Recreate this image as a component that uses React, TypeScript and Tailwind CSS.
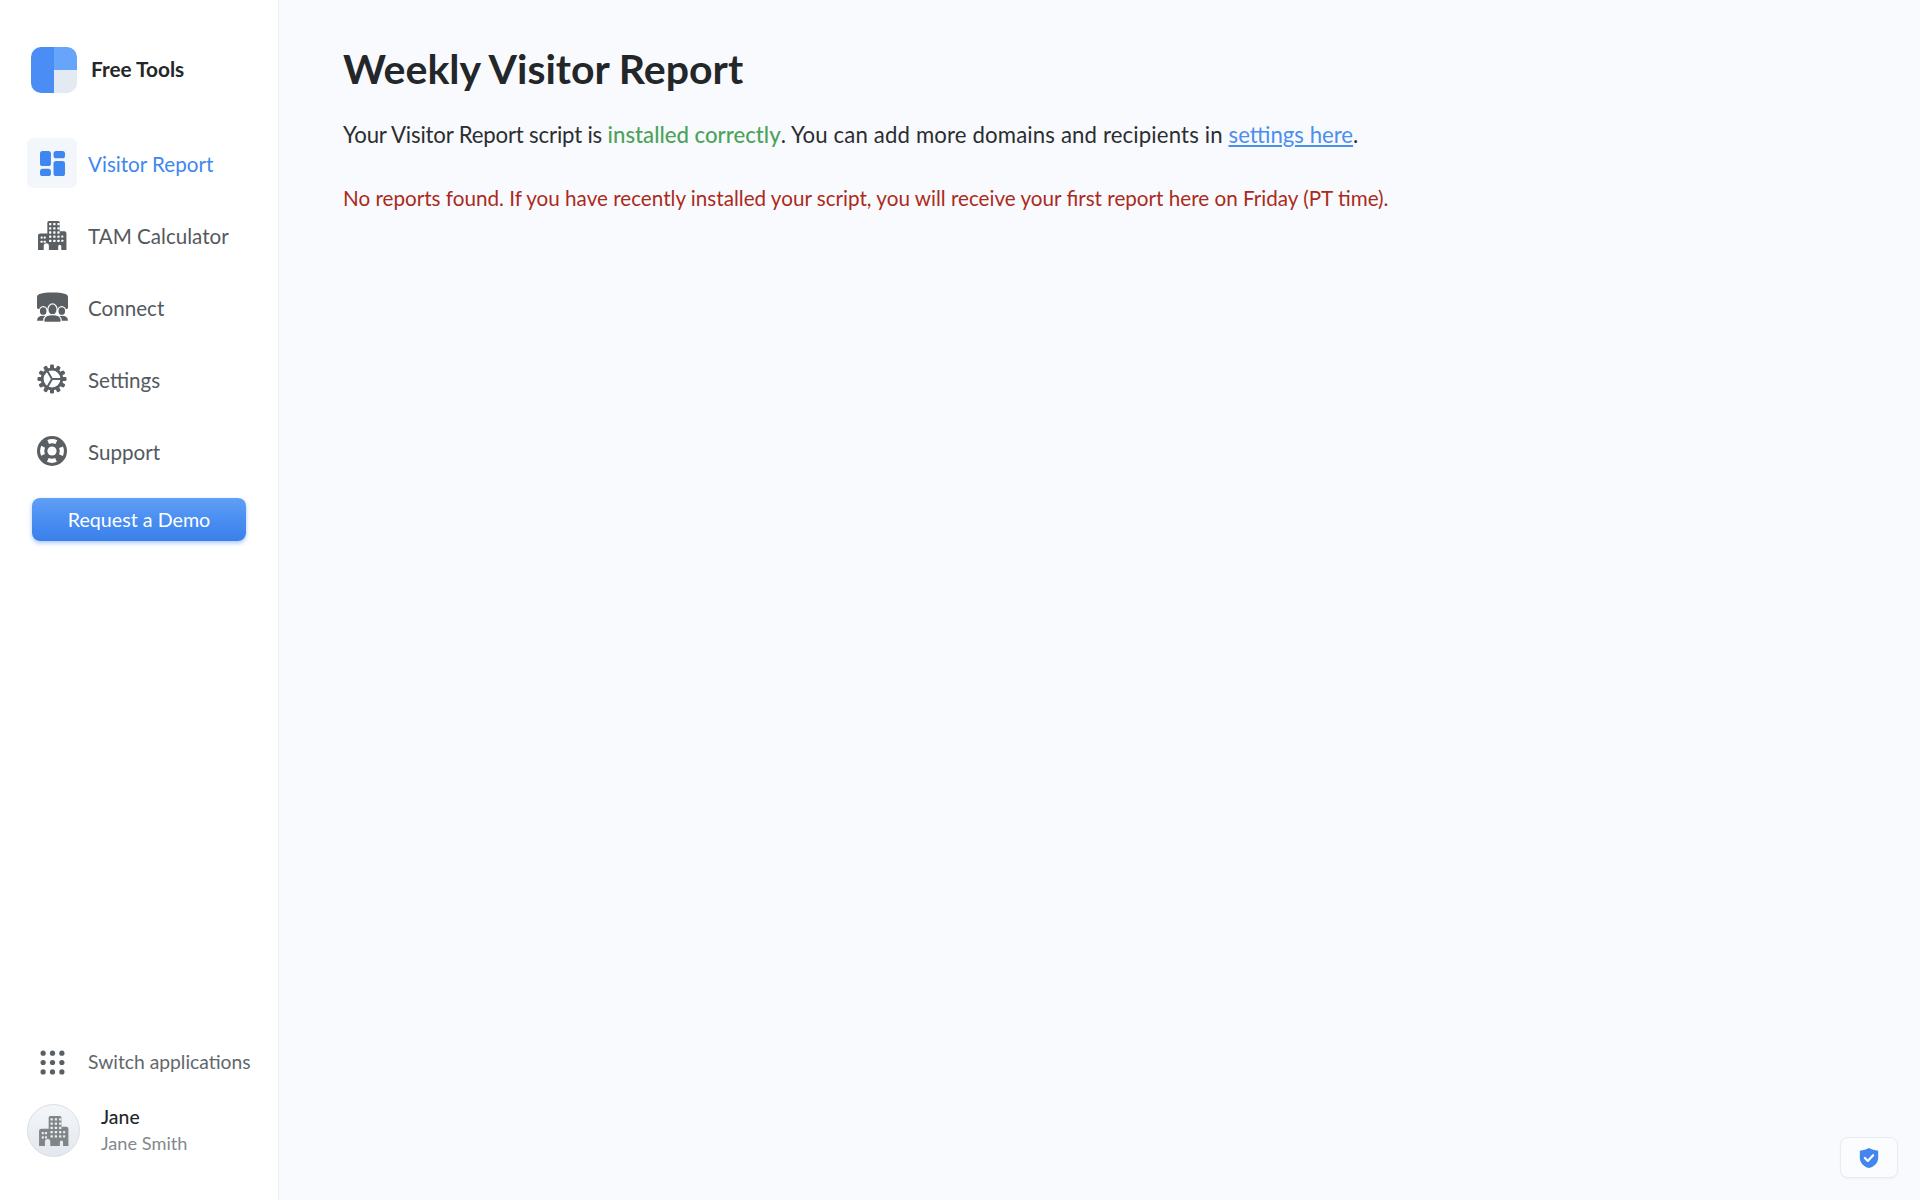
function Building({ className, hole = "#ffffff" }: { className?: string; hole?: string }) {
  const dots: [number, number][] = [];
  for (const y of [3, 7, 11, 15, 19]) for (const x of [12, 16, 20]) dots.push([x, y]);
  return (
    <svg viewBox="0 0 30 30" className={className}>
      <path fill="currentColor" fillRule="evenodd" d="M10 2.500a1.500 1.500 0 0 1 1.500-1.500h9a1.500 1.500 0 0 1 1.500 1.500V11h4.500a2 2 0 0 1 2 2v16h-5v-3.500a1.500 1.500 0 0 0-3 0V29h-9v-4a2.500 2.500 0 0 0-5 0v4H1V15a2 2 0 0 1 2-2h7z" />
      {dots.map(([x, y]) => (
        <rect key={x + "-" + y} x={x - 0.3} y={y} width="2.200" height="2.200" rx="0.500" fill={hole} />
      ))}
      {[[4, 16], [4, 20], [7, 16], [7, 20], [24, 15], [24, 19]].map(([x, y]) => (
        <rect key={"s" + x + y} x={x - 0.5} y={y} width="2" height="2" rx="0.500" fill={hole} />
      ))}
    </svg>
  );
}

function Dashboard({ className }: { className?: string }) {
  return (
    <svg viewBox="0 0 24 24" className={className}>
      <g fill="currentColor">
        <rect x="0" y="0" width="10.500" height="14.500" rx="2.500" />
        <rect x="0" y="17" width="10.500" height="7" rx="2.500" />
        <rect x="13" y="0" width="11" height="7" rx="2.500" />
        <rect x="13" y="9.500" width="11" height="14.500" rx="2.500" />
      </g>
    </svg>
  );
}

function Connect({ className }: { className?: string }) {
  return (
    <svg viewBox="0 0 30 30" className={className}>
      <path fill="currentColor" d="M0 5c0-3 4-4.500 15-4.500S30 2 30 5v10c0 1-1 1.500-2 1.500H2c-1 0-2-.5-2-1.500z" />
      <g fill="currentColor" stroke="#ffffff" strokeWidth="1.200">
        <ellipse cx="6" cy="18.500" rx="3.800" ry="4.400" />
        <ellipse cx="24" cy="18.500" rx="3.800" ry="4.400" />
        <path d="M-0.500 27.500c0-3.500 2.500-5 6.500-5s6.500 1.500 6.500 5c0 .8-.5 1-1 1H0.500c-.5 0-1-.2-1-1z" />
        <path d="M17.500 27.500c0-3.500 2.500-5 6.500-5s6.500 1.500 6.500 5c0 .8-.5 1-1 1H18.500c-.5 0-1-.2-1-1z" />
      </g>
      <g fill="currentColor" stroke="#ffffff" strokeWidth="1.200">
        <ellipse cx="15" cy="17" rx="4.500" ry="5.500" />
        <path d="M6.500 27.800c0-3.800 3.500-5.800 8.500-5.800s8.500 2 8.500 5.800c0 1-.6 1.700-1.600 1.700H8.100c-1 0-1.600-.7-1.600-1.700z" />
      </g>
    </svg>
  );
}

function Gear({ className }: { className?: string }) {
  const teeth = Array.from({ length: 12 }, (_, i) => i * 30);
  return (
    <svg viewBox="0 0 30 30" className={className}>
      <g fill="currentColor">
        {teeth.map((a) => (
          <rect key={a} x="13" y="0.500" width="4" height="6" rx="1.300" transform={`rotate(${a} 15 15)`} />
        ))}
      </g>
      <circle cx="15" cy="15" r="9.800" fill="#ffffff" stroke="currentColor" strokeWidth="2.800" />
      <path d="M15 15 L24 15 M15 15 L10.500 7.200 M15 15 L10.500 22.800" stroke="currentColor" strokeWidth="2" fill="none" />
    </svg>
  );
}

function Lifebuoy({ className }: { className?: string }) {
  return (
    <svg viewBox="0 0 30 30" className={className}>
      <circle cx="15" cy="15" r="15" fill="currentColor" />
      <circle cx="15" cy="15" r="9.800" fill="none" stroke="#ffffff" strokeWidth="4.200" strokeDasharray="8.400 7" strokeDashoffset="4.200" />
      <circle cx="15" cy="15" r="5.600" fill="currentColor" />
      <circle cx="15" cy="15" r="4.600" fill="#ffffff" />
    </svg>
  );
}

function NineDots({ className }: { className?: string }) {
  const c = [3, 12, 21];
  return (
    <svg viewBox="0 0 24 24" className={className}>
      {c.map((y) => c.map((x) => <circle key={x + "-" + y} cx={x} cy={y} r="2.500" fill="currentColor" />))}
    </svg>
  );
}

function NavItem({ icon, label, active }: { icon: React.ReactNode; label: string; active?: boolean }) {
  return (
    <div className="flex items-center h-[50px] mb-[22px]">
      <div className={`w-[50px] h-[50px] rounded-md flex items-center justify-center ${active ? "bg-[#f3f6fa] text-[#3f87f0]" : "text-[#5a5f63]"}`}>
        {icon}
      </div>
      <span className={`ml-[11px] mt-[2px] text-[20.6px] leading-none ${active ? "text-[#3f87f0]" : "text-[#54595e]"}`}>{label}</span>
    </div>
  );
}

export default function App() {
  return (
    <div
      className="flex w-full h-[1200px] overflow-hidden bg-[#f9fafd] text-[#24272a]"
      style={{ fontFamily: '"Lato", "Liberation Sans", sans-serif' }}
    >
      <aside className="w-[279px] shrink-0 h-full bg-white border-r border-[#eceef1] flex flex-col pl-[27px]">
        <div className="flex items-center pt-[46px] pl-[4px] h-[93px]">
          <div className="w-[46px] h-[46px] rounded-[10px] overflow-hidden flex">
            <div className="w-1/2 h-full bg-[#4a8ef5]" />
            <div className="w-1/2 h-full flex flex-col">
              <div className="h-1/2 bg-[#66a5fa]" />
              <div className="h-1/2 bg-[#e3eaf3]" />
            </div>
          </div>
          <span className="ml-[14px] -mt-[1px] text-[20.8px] font-bold leading-none text-[#24272a]">Free Tools</span>
        </div>

        <nav className="mt-[45px] flex flex-col">
          <NavItem active label="Visitor Report" icon={<Dashboard className="w-[25px] h-[25px]" />} />
          <NavItem label="TAM Calculator" icon={<Building className="w-[31px] h-[31px]" />} />
          <NavItem label="Connect" icon={<Connect className="w-[31px] h-[31px]" />} />
          <NavItem label="Settings" icon={<Gear className="w-[30px] h-[30px]" />} />
          <NavItem label="Support" icon={<Lifebuoy className="w-[30px] h-[30px]" />} />
        </nav>

        <div className="ml-[5px] w-[214px] h-[43px] rounded-lg bg-gradient-to-b from-[#5f9ff5] via-[#4a8ef2] to-[#3a80ea] shadow-[0_2px_4px_rgba(60,130,240,0.45)] flex items-center justify-center text-white text-[19.7px] leading-none">
          Request a Demo
        </div>

        <div className="mt-auto pb-[43px] flex flex-col">
          <div className="flex items-center h-[40px]">
            <div className="w-[50px] flex justify-center text-[#5a5f63]">
              <NineDots className="w-[25px] h-[25px]" />
            </div>
            <span className="ml-[11px] text-[19.3px] leading-none text-[#62676b]">Switch applications</span>
          </div>
          <div className="flex items-center mt-[22px]">
            <div className="w-[53px] h-[53px] rounded-full bg-gradient-to-b from-[#f4f6f9] to-[#e3e8ef] border border-[#d9dee6] flex items-center justify-center text-[#808588]">
              <Building hole="#eaeef3" className="w-[32px] h-[32px]" />
            </div>
            <div className="ml-[21px] -mt-[2px] flex flex-col">
              <span className="text-[19.4px] leading-[26px] font-medium text-[#24272a]">Jane</span>
              <span className="text-[18.2px] leading-[26px] text-[#84888c]">Jane Smith</span>
            </div>
          </div>
        </div>
      </aside>

      <main className="relative flex-1 pl-[64px] pt-[44px]">
        <h1 className="text-[41px] leading-[50px] font-bold text-[#24272a]">Weekly Visitor Report</h1>
        <p className="mt-[26px] text-[22.2px] leading-[30px] text-[#2b2e31]">
          <span className="tracking-[-0.17px]">Your Visitor Report script is </span>
          <span className="font-medium text-[#4ca35a]">installed correctly</span>
          <span className="tracking-[0.14px]">. You can add more domains and recipients in </span>
          <span className="underline text-[#4a8ef0]">settings here</span>.
        </p>
        <p className="mt-[33px] text-[20.65px] leading-[30px] text-[#ab2a1c]">
          No reports found. If you have recently installed your script, you will receive your first report here on Friday (PT time).
        </p>

        <div className="absolute right-[22px] bottom-[22px] w-[58px] h-[41px] rounded-lg border border-[#e8ebf0] bg-[#fbfcfe] shadow-[0_1px_2px_rgba(0,0,0,0.04)] flex items-center justify-center">
          <svg viewBox="0 0 24 24" className="w-[22px] h-[22px]">
            <path fill="#4486ee" d="M12 1c3 1.500 6 2.500 10 3v8c0 5.500-4.500 9.500-10 11C6.500 21.500 2 17.500 2 12V4c4-.5 7-1.500 10-3z" />
            <path d="M7.500 12l3.200 3.200L16.500 9" fill="none" stroke="#ffffff" strokeWidth="2.400" strokeLinecap="round" strokeLinejoin="round" />
          </svg>
        </div>
      </main>
    </div>
  );
}
